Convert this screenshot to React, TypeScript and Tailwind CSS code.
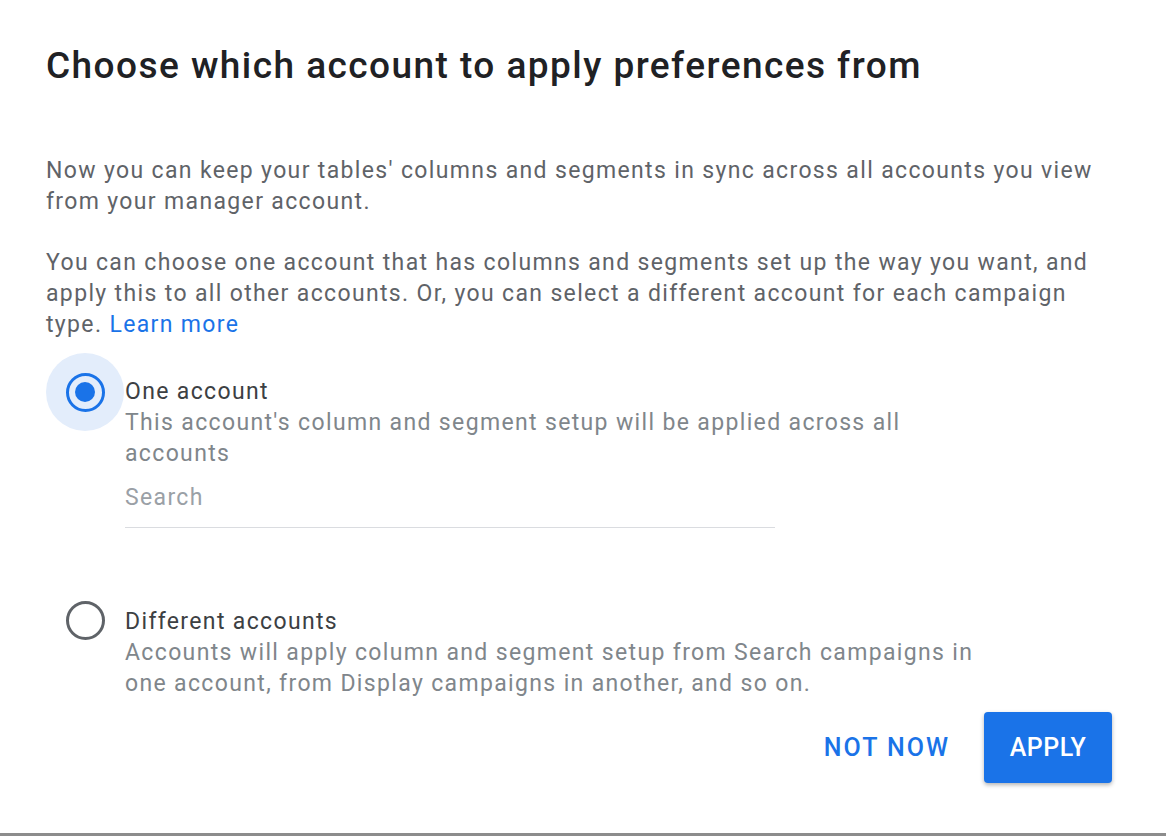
import { useState } from "react";

function Radio({ checked }: { checked: boolean }) {
  return (
    <div
      className={`flex h-[78px] w-[78px] shrink-0 items-center justify-center rounded-full ${
        checked ? "bg-[#e3edfb]" : ""
      }`}
    >
      {checked ? (
        <div className="flex h-[39px] w-[39px] items-center justify-center rounded-full border-[3.5px] border-[#1a73e8]">
          <div className="h-[20px] w-[20px] rounded-full bg-[#1a73e8]" />
        </div>
      ) : (
        <div className="h-[39px] w-[39px] rounded-full border-[3px] border-[#5f6368]" />
      )}
    </div>
  );
}

export default function App() {
  const [choice, setChoice] = useState<"one" | "different">("one");

  return (
    <div
      className="flex h-[836px] w-[1166px] flex-col border-b-[3px] border-[#8c8c8c] bg-white pl-[46px] pr-[54px]"
      style={{ fontFamily: "Roboto, 'Noto Sans', Arial, sans-serif" }}
    >
      <h1 className="mt-[45px] whitespace-nowrap text-[37px] font-medium leading-[42px] tracking-[1.45px] text-[#202124]">
        Choose which account to apply preferences from
      </h1>

      <p className="mt-[68px] whitespace-nowrap text-[23px] leading-[31px] tracking-[1.35px] text-[#5f6368]">
        Now you can keep your tables' columns and segments in sync across all accounts you view
        <br />
        from your manager account.
      </p>
      <p className="mt-[30px] whitespace-nowrap text-[23px] leading-[31px] tracking-[1.35px] text-[#5f6368]">
        You can choose one account that has columns and segments set up the way you want, and
        <br />
        apply this to all other accounts. Or, you can select a different account for each campaign
        <br />
        type. <a className="text-[#1a73e8]">Learn more</a>
      </p>

      {/* One account */}
      <div className="mt-[13px] flex cursor-pointer" onClick={() => setChoice("one")}>
        <Radio checked={choice === "one"} />
        <div className="ml-px mt-[23px] whitespace-nowrap text-[23px] leading-[31px] tracking-[1.35px]">
          <div className="text-[#3c4043]">One account</div>
          <div className="text-[#80868b]">
            This account's column and segment setup will be applied across all
            <br />
            accounts
          </div>
          <div className="mt-[13px] w-[650px] border-b border-[#dadce0] pb-[14px] text-[#9aa0a6]">
            Search
          </div>
        </div>
      </div>

      {/* Different accounts */}
      <div className="mt-[53px] flex cursor-pointer" onClick={() => setChoice("different")}>
        <Radio checked={choice === "different"} />
        <div className="ml-px mt-[25px] whitespace-nowrap text-[23px] leading-[31px] tracking-[1.35px]">
          <div className="text-[#3c4043]">Different accounts</div>
          <div className="text-[#80868b]">
            Accounts will apply column and segment setup from Search campaigns in
            <br />
            one account, from Display campaigns in another, and so on.
          </div>
        </div>
      </div>

      <div className="mt-[13px] flex items-center justify-end gap-[34px]">
        <button className="text-[25px] font-medium tracking-[2px] text-[#1a73e8]">NOT NOW</button>
        <button className="h-[71px] w-[128px] rounded-[4px] bg-[#1a73e8] text-[25px] font-medium tracking-[0.5px] text-white shadow-[0_2px_4px_rgba(0,0,0,0.3)]">
          APPLY
        </button>
      </div>
    </div>
  );
}
